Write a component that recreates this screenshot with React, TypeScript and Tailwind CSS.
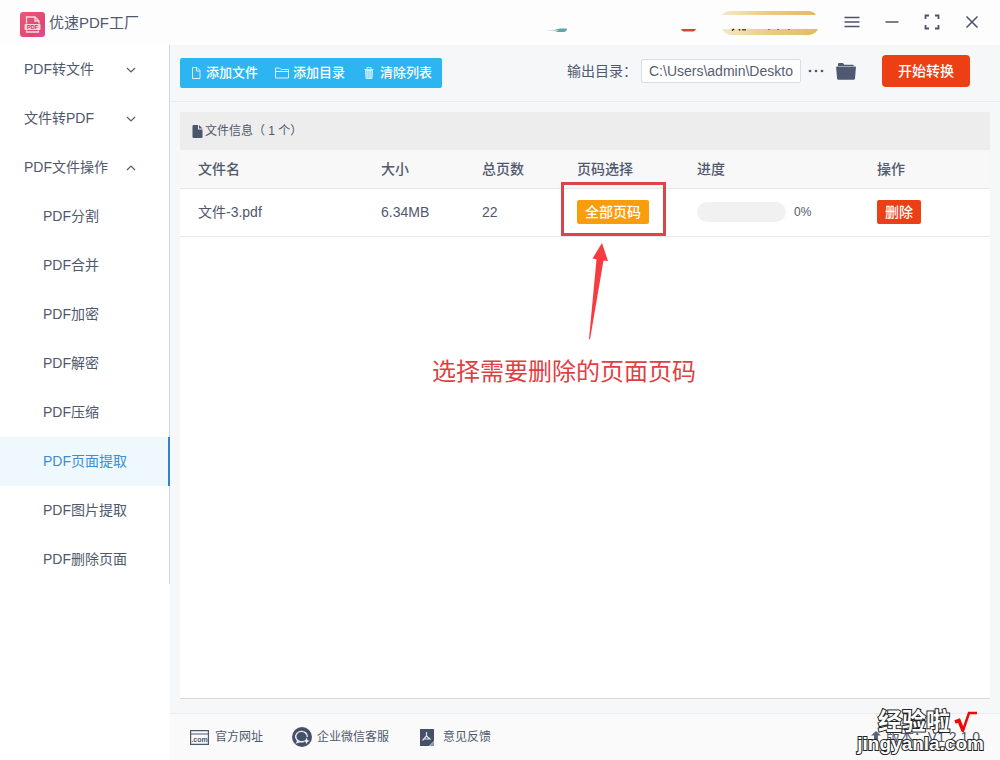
import type { ReactNode } from "react";

const operations = [
  "PDF分割",
  "PDF合并",
  "PDF加密",
  "PDF解密",
  "PDF压缩",
  "PDF页面提取",
  "PDF图片提取",
  "PDF删除页面",
];

function Chevron({ up = false }: { up?: boolean }) {
  return (
    <svg width="10" height="6" viewBox="0 0 10 6" fill="none" stroke="#555d70" strokeWidth="1.2">
      <path d={up ? "M1 5 5 1l4 4" : "M1 1l4 4 4-4"} />
    </svg>
  );
}

function Group({ label, open = false }: { label: string; open?: boolean }) {
  return (
    <button className="flex h-[49px] w-full items-center justify-between pr-[33px] pl-6 text-left" aria-expanded={open}>
      <span className="pb-[2px]">{label}</span>
      <Chevron up={open} />
    </button>
  );
}

function Logo() {
  return (
    <svg width="25" height="25" viewBox="0 0 25 25">
      <defs>
        <linearGradient id="logo" x1="0" y1="0" x2="1" y2="1">
          <stop offset="0" stopColor="#ee5878" />
          <stop offset="0.7" stopColor="#df4773" />
          <stop offset="1" stopColor="#e04b9e" />
        </linearGradient>
      </defs>
      <rect width="25" height="25" rx="3" fill="url(#logo)" />
      <path d="M6.500 11.500V5h8.500l4 4v2.500M15 5v4h4M6.500 18.500v1.500h12v-1.500" fill="none" stroke="#ffd9e0" strokeWidth="1.3" />
      <rect x="4.500" y="12" width="16" height="6" rx="1" fill="#ffd0da" />
      <text x="12.500" y="17" textAnchor="middle" fontSize="5.5" fontWeight="700" fill="#c92e5d" fontFamily="Liberation Sans, sans-serif">PDF</text>
    </svg>
  );
}

function FolderSolid() {
  return (
    <svg width="20" height="17" viewBox="0 0 20 17" fill="#4f5a72">
      <path d="M2 4V1.2C2 .5 2.4 0 3 0h4l1.2 1.7h8.3c.8 0 1.3.4 1.3 1.1V3H2z" />
      <path d="M1 3.6h18c.6 0 1 .4.9 1l-.9 11c0 .7-.5 1.2-1.2 1.2H2.300c-.7 0-1.200-.5-1.200-1.200L.1 4.600c0-.6.3-1 .9-1z" />
    </svg>
  );
}

function WindowButton({ label, children }: { label: string; children: ReactNode }) {
  return (
    <button aria-label={label} className="flex size-5 items-center justify-center">
      <svg width="16" height="16" viewBox="0 0 16 16" fill="none" stroke="#4b5368" strokeWidth="1.5">
        {children}
      </svg>
    </button>
  );
}

function Header() {
  return (
    <header className="flex h-[45px] shrink-0 items-center justify-between bg-[#fdfdfd] pr-[18px] pl-5">
      <h1 className="flex items-center gap-1 pt-1 text-[15px]">
        <Logo />
        <span className="pb-1">优速PDF工厂</span>
      </h1>
      <div className="flex items-center gap-6">
        <svg width="272" height="24" viewBox="0 0 272 24" aria-hidden="true">
          <defs>
            <linearGradient id="gold" x1="0" x2="1">
              <stop offset="0" stopColor="#f5e8c8" />
              <stop offset="0.5" stopColor="#eacb85" />
              <stop offset="1" stopColor="#e2bc62" />
            </linearGradient>
          </defs>
          <path d="M0 19.500 8 19l6-1.500h7c0 2-1 3-3 3.500H9l4-1.500z" fill="#64a2a4" />
          <path d="M135 18h15c-1 2-2 2.500-3 2.500h-9c-1 0-2-.5-3-2.500z" fill="#c24e39" />
          <path d="M176 4c2-2.500 5-4 8-4h78c4 0 6 1 8 4z" fill="url(#gold)" />
          <path d="M176 18h96c-2 4-6 6-11 6h-74c-5 0-9-2-11-6z" fill="url(#gold)" />
          <path d="M188 18l-2 1.500M193.500 18v1.500M197 18v1.500M199 18v1.500" stroke="#302010" strokeWidth="1.500" />
          <path d="M222 18.500h2M231 18.500h2M242 18.500h2" stroke="#a07830" />
        </svg>
        <nav aria-label="窗口" className="flex items-center gap-5 pb-[2px]">
          <WindowButton label="菜单"><path d="M.5 3.500h15M.5 8h15M.5 12.500h15" /></WindowButton>
          <WindowButton label="最小化"><path d="M1.500 8h13" /></WindowButton>
          <WindowButton label="最大化"><path d="M5 1.500H1.500V5M11 1.500h3.500V5M5 14.500H1.500V11M11 14.500h3.500V11" strokeWidth="1.800" /></WindowButton>
          <WindowButton label="关闭"><path d="m2.500 2.500 11 11m0-11-11 11" /></WindowButton>
        </nav>
      </div>
    </header>
  );
}

function Sidebar() {
  return (
    <aside className="w-[170px] shrink-0 bg-white">
      <nav className="border-r border-[#d4d8de]">
        <Group label="PDF转文件" />
        <Group label="文件转PDF" />
        <Group label="PDF文件操作" open />
        {operations.map((name) => (
          <a
            key={name}
            href="#"
            className={
              name === "PDF页面提取"
                ? "-mr-px flex h-[49px] items-center border-r-2 border-[#3284ce] bg-[#eff9fd] pb-[2px] pl-[43px] text-[#3b8ed2]"
                : "flex h-[49px] items-center pb-[2px] pl-[43px]"
            }
          >
            {name}
          </a>
        ))}
      </nav>
    </aside>
  );
}

function Toolbar() {
  return (
    <div className="flex h-[57px] shrink-0 items-center justify-between border-b border-[#e9ecef] pr-[30px] pl-[10px]">
      <div className="flex h-[30px] items-center gap-[17px] rounded-xs bg-[#2db5f2] px-[10px] text-[13px] font-medium text-white">
        <button className="flex items-center gap-1">
          <svg width="12" height="12" viewBox="0 0 12 12" fill="none" stroke="#d9f2fd"><path d="M2.500.5h4.500l3 3v8H2.500zM6.500.5V4H10" /></svg>
          添加文件
        </button>
        <button className="flex items-center gap-1">
          <svg width="14" height="12" viewBox="0 0 14 12" fill="none" stroke="#d9f2fd"><path d="M.5 11V1h4l1.500 1.500h7.500V11zM.5 4.500h13" /></svg>
          添加目录
        </button>
        <button className="flex items-center gap-1">
          <svg width="14" height="12" viewBox="0 0 14 12" fill="none" stroke="#c9ecfc"><path d="M2.500 2.500h9M5 2V.5h4V2" /><path d="M3.500 3.500h7l-.5 8H4z" fill="#8ed8f8" /><path d="M5.800 4v7M8.200 4v7" /></svg>
          清除列表
        </button>
      </div>
      <div className="flex items-center pb-[4px]">
        <label htmlFor="output">输出目录：</label>
        <input
          id="output"
          readOnly
          defaultValue="C:\Users\admin\Deskto"
          className="ml-1 h-6 w-40 rounded-xs border border-[#d9dce1] bg-white px-[7px] text-[#555d70] outline-none"
        />
        <button aria-label="更多" className="ml-[7px]">
          <svg width="16" height="4" viewBox="0 0 16 4" fill="#4f5a72"><circle cx="2" cy="2" r="1.300" /><circle cx="8" cy="2" r="1.300" /><circle cx="14" cy="2" r="1.300" /></svg>
        </button>
        <button aria-label="打开目录" className="ml-3"><FolderSolid /></button>
        <button className="ml-[26px] h-8 w-[88px] rounded-sm bg-[#ec4014] font-medium text-white">开始转换</button>
      </div>
    </div>
  );
}

function FileTable() {
  return (
    <section className="mx-[10px] mt-[10px] mb-[14px] grow border-b border-[#d5dadd] bg-white">
      <h2 className="flex h-[38px] items-center gap-[2px] bg-[#ededed] pl-3 text-xs">
        <svg width="11" height="13" viewBox="0 0 11 13" fill="#4b566d"><path d="M1.500 0H6v4.500h4.500V12a1 1 0 0 1-1 1h-8a1 1 0 0 1-1-1V1a1 1 0 0 1 1-1zM7 0l3.500 3.500H7z" /></svg>
        <span>文件信息（ 1 个）</span>
      </h2>
      <table className="w-full table-fixed text-left">
        <colgroup>
          <col />
          <col className="w-[101px]" />
          <col className="w-[95px]" />
          <col className="w-[120px]" />
          <col className="w-[180px]" />
          <col className="w-[131px]" />
        </colgroup>
        <thead className="bg-[#f8f8f8]">
          <tr className="h-[38px] border-b border-[#e6e8ea]">
            <th className="pl-[18px] font-medium">文件名</th>
            <th className="pl-[18px] font-medium">大小</th>
            <th className="pl-[18px] font-medium">总页数</th>
            <th className="pl-[18px] font-medium">页码选择</th>
            <th className="pl-[18px] font-medium">进度</th>
            <th className="pl-[18px] font-medium">操作</th>
          </tr>
        </thead>
        <tbody>
          <tr className="h-12 border-b border-[#e6e8ea]">
            <td className="pl-[18px]">文件-3.pdf</td>
            <td className="pl-[18px]">6.34MB</td>
            <td className="pl-[18px]">22</td>
            <td className="pl-[18px]">
              <div className="relative w-[72px]">
                <button className="block h-6 w-full rounded-xs bg-[#fa9d0c] font-medium text-white">全部页码</button>
                <Annotation />
              </div>
            </td>
            <td className="pl-[18px]">
              <div className="flex items-center gap-2">
                <div role="progressbar" aria-label="进度" aria-valuenow={0} className="h-5 w-[89px] rounded-full bg-[#f1f1f1]" />
                <span className="text-xs">0%</span>
              </div>
            </td>
            <td className="pl-[18px]">
              <button className="block h-6 rounded-xs bg-[#eb4015] px-2 font-medium text-white">删除</button>
            </td>
          </tr>
        </tbody>
      </table>
    </section>
  );
}

function Annotation() {
  return (
    <>
      <div className="pointer-events-none absolute -top-[18px] -left-4 h-[54px] w-[105px] border-3 border-[#db4547]" />
      <svg className="absolute top-[43px] left-[11px]" width="21" height="98" viewBox="0 0 21 98">
        <path d="M14 0 4.500 15.500l4 .8L1 96l1 .5L15.500 17.500l4.500.5z" fill="#f73c40" />
      </svg>
      <p className="absolute top-[154px] -left-[145px] text-2xl leading-9 whitespace-nowrap text-[#df3f42]">选择需要删除的页面页码</p>
    </>
  );
}

function Footer() {
  return (
    <footer className="flex h-[47px] shrink-0 items-center justify-between border-t border-[#e9ecef] bg-[#fafafa] pr-5 pl-5 text-xs">
      <div className="flex items-center gap-[29px]">
        <a href="#" className="flex items-center gap-[6px]">
          <svg width="19" height="15" viewBox="0 0 19 15"><path d="M.6.6h17.800v13.800H.6zM.6 4h17.800" fill="none" stroke="#4b5871" strokeWidth="1.200" /><text x="9.500" y="12" textAnchor="middle" fontSize="7" fontWeight="700" fill="#4b5871" fontFamily="Liberation Sans, sans-serif">.com</text></svg>
          官方网址
        </a>
        <a href="#" className="flex items-center gap-[5px]">
          <svg width="20" height="20" viewBox="0 0 20 20"><circle cx="10" cy="10" r="10" fill="#465169" /><path d="M12 14.300A5.800 5.200 0 1 1 15.300 10M6.500 13l-1.500 2.500 3-1" fill="none" stroke="#e8edf4" strokeWidth="1.400" /><path d="m14.500 10.500 1 2.500 2 1-2 1-1 2-1-2-2-1 2-1z" fill="#e8edf4" /></svg>
          企业微信客服
        </a>
        <a href="#" className="flex items-center gap-2">
          <svg width="17" height="17" viewBox="0 0 17 17"><path d="M2 0h14v12l-5 5H2z" fill="#465169" /><path d="M16 12.500V17h-4.500z" fill="#8a93a4" /><path d="M8.500 3v4L4.500 11.500M8.500 7l4 3.500M5.500 10h7" fill="none" stroke="#dce3ec" strokeWidth="1.200" /></svg>
          意见反馈
        </a>
      </div>
      <div className="relative flex items-center gap-1 text-sm">
        <svg width="12" height="12" viewBox="0 0 12 12" fill="#59657b"><path d="M6 0l5 4.500H8V12H4V4.500H1z" /></svg>
        版本：V1.2.1.0
        <div className="absolute -right-1 -bottom-[7px] flex flex-col items-end font-bold whitespace-nowrap text-white">
          <div className="flex items-center gap-1 pr-[6px] text-2xl leading-6">
            <span className="[-webkit-text-stroke:2px_#222] [paint-order:stroke_fill]">经验啦</span>
            <svg width="24" height="24" viewBox="0 0 24 24" fill="none" stroke="#f00808"><path d="m1 12 4-1.500 4 10" strokeWidth="3.500" /><path d="M8.500 22 15 3h8" strokeWidth="2.500" /></svg>
          </div>
          <div className="text-[19px] leading-5 [-webkit-text-stroke:2px_#222] [paint-order:stroke_fill]">jingyanla.com</div>
        </div>
      </div>
    </footer>
  );
}

export default function App() {
  return (
    <div className="flex min-h-screen flex-col bg-white font-['Liberation_Sans','Noto_Sans_CJK_SC',sans-serif] text-sm text-[#4f586c]">
      <Header />
      <div className="flex grow">
        <Sidebar />
        <main className="flex min-w-0 grow flex-col bg-[#f5f7f9]">
          <Toolbar />
          <FileTable />
          <Footer />
        </main>
      </div>
    </div>
  );
}
